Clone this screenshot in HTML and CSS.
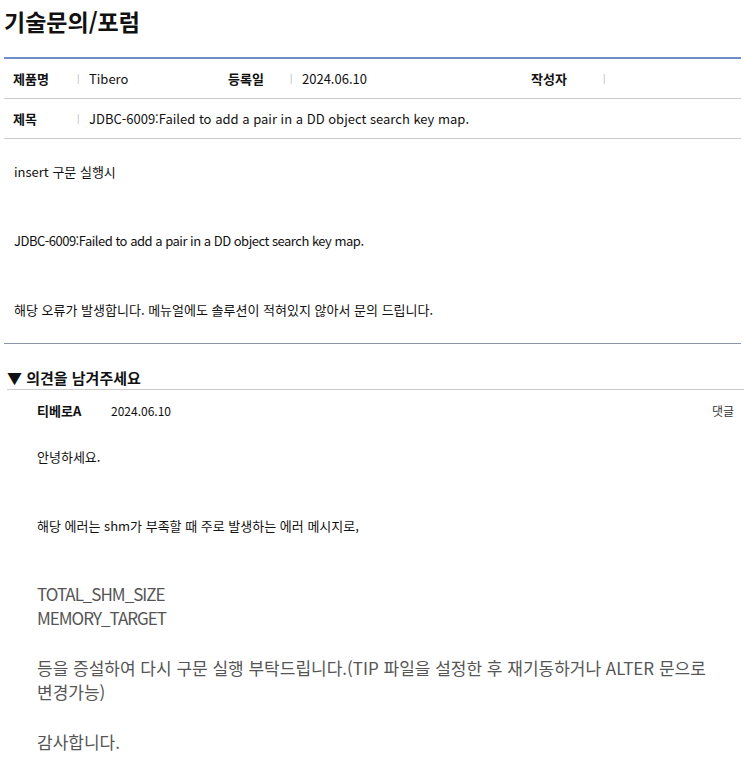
FILE: index.html
```html
<!DOCTYPE html>
<html lang="ko">
<head>
    <meta charset="UTF-8">
    <meta name="viewport" content="width=device-width, initial-scale=1.0">
    <title>기술문의/포럼</title>
    <link rel="stylesheet" href="styles.css">
</head>
<body>

    <h1 class="page-title">기술문의/포럼</h1>

    <div class="post-info">
        <div class="info-row">
            <div class="info-cell cell-product">
                <span class="info-label">제품명</span>
                <span class="info-sep">|</span>
                <span class="info-value">Tibero</span>
            </div>
            <div class="info-cell cell-date">
                <span class="info-label">등록일</span>
                <span class="info-sep">|</span>
                <span class="info-value">2024.06.10</span>
            </div>
            <div class="info-cell cell-writer">
                <span class="info-label">작성자</span>
                <span class="info-sep">|</span>
                <span class="info-value"></span>
            </div>
        </div>
        <div class="info-row">
            <div class="info-cell">
                <span class="info-label">제목</span>
                <span class="info-sep">|</span>
                <span class="info-value">JDBC-6009:Failed to add a pair in a DD object search key map.</span>
            </div>
        </div>
    </div>

    <div class="post-body">
        <p>insert 구문 실행시</p>
        <p class="latin">JDBC-6009:Failed to add a pair in a DD object search key map.</p>
        <p>해당 오류가 발생합니다. 메뉴얼에도 솔루션이 적혀있지 않아서 문의 드립니다.</p>
    </div>

    <div class="comments">
        <h3 class="comments-title">▼ 의견을 남겨주세요</h3>
        <div class="comment">
            <div class="comment-meta">
                <span class="comment-author">티베로A</span>
                <span class="comment-date">2024.06.10</span>
                <a class="comment-reply">댓글</a>
            </div>
            <div class="comment-body">
                <p>안녕하세요.</p>
                <p>해당 에러는 shm가 부족할 때 주로 발생하는 에러 메시지로,</p>
            </div>
            <div class="comment-detail">
                <p class="latin">TOTAL_SHM_SIZE<br>MEMORY_TARGET</p>
                <p>등을 증설하여 다시 구문 실행 부탁드립니다.(TIP 파일을 설정한 후 재기동하거나 ALTER 문으로 변경가능)</p>
                <p>감사합니다.</p>
            </div>
        </div>
    </div>

</body>
</html>
```

FILE: styles.css
```css
body {
    font-family: 'Noto Sans CJK KR', 'Noto Sans', sans-serif;
    margin: 0;
    padding: 0 8px 0 4px;
    background-color: #ffffff;
    color: #111111;
    word-break: keep-all;
}

p {
    margin: 0;
}

.page-title {
    font-size: 23px;
    font-weight: bold;
    line-height: 26px;
    margin: 8px 0 0 0;
    height: 49px;
}

.post-info {
    border-top: 2px solid #6f8ccb;
}

.info-row {
    display: flex;
    height: 39px;
    align-items: center;
    border-bottom: 1px solid #cccccc;
    font-size: 13px;
}

.info-cell {
    display: flex;
    align-items: center;
    padding-left: 9px;
    box-sizing: border-box;
}

.cell-product {
    width: 215px;
}

.cell-date {
    width: 303px;
}

.info-label {
    font-weight: bold;
    width: 64px;
}

.cell-date .info-label {
    width: 62px;
}

.cell-writer .info-label {
    width: 72px;
}

.info-sep {
    color: #aaaaaa;
    font-size: 9px;
    width: 12px;
}

.post-body {
    padding: 24px 10px 24px 10px;
    border-bottom: 1px solid #8a94a8;
    font-size: 13px;
    display: flex;
    flex-direction: column;
    gap: 51px;
}

.post-body p {
    line-height: 18px;
}

.post-body .latin {
    letter-spacing: -0.5px;
}

.comments {
    margin: 23px -3px 0 3px;
}

.comments-title {
    font-size: 15px;
    font-weight: bold;
    line-height: 22px;
    margin: 0;
    border-bottom: 1px solid #cccccc;
}

.comment {
    padding: 11px 10px 0 30px;
}

.comment-meta {
    display: flex;
    align-items: center;
    line-height: 20px;
}

.comment-author {
    font-size: 13px;
    font-weight: bold;
    width: 74px;
}

.comment-date {
    font-size: 12px;
}

.comment-reply {
    margin-left: auto;
    font-size: 12px;
    color: #333333;
    cursor: pointer;
}

.comment-body {
    font-size: 13px;
    display: flex;
    flex-direction: column;
    gap: 51px;
    padding-top: 27px;
}

.comment-body p {
    line-height: 18px;
}

.comment-detail {
    font-size: 17px;
    color: #555555;
    line-height: 24px;
    padding-top: 47px;
    display: flex;
    flex-direction: column;
    gap: 26px;
}

.comment-detail .latin {
    letter-spacing: -1px;
}
```
